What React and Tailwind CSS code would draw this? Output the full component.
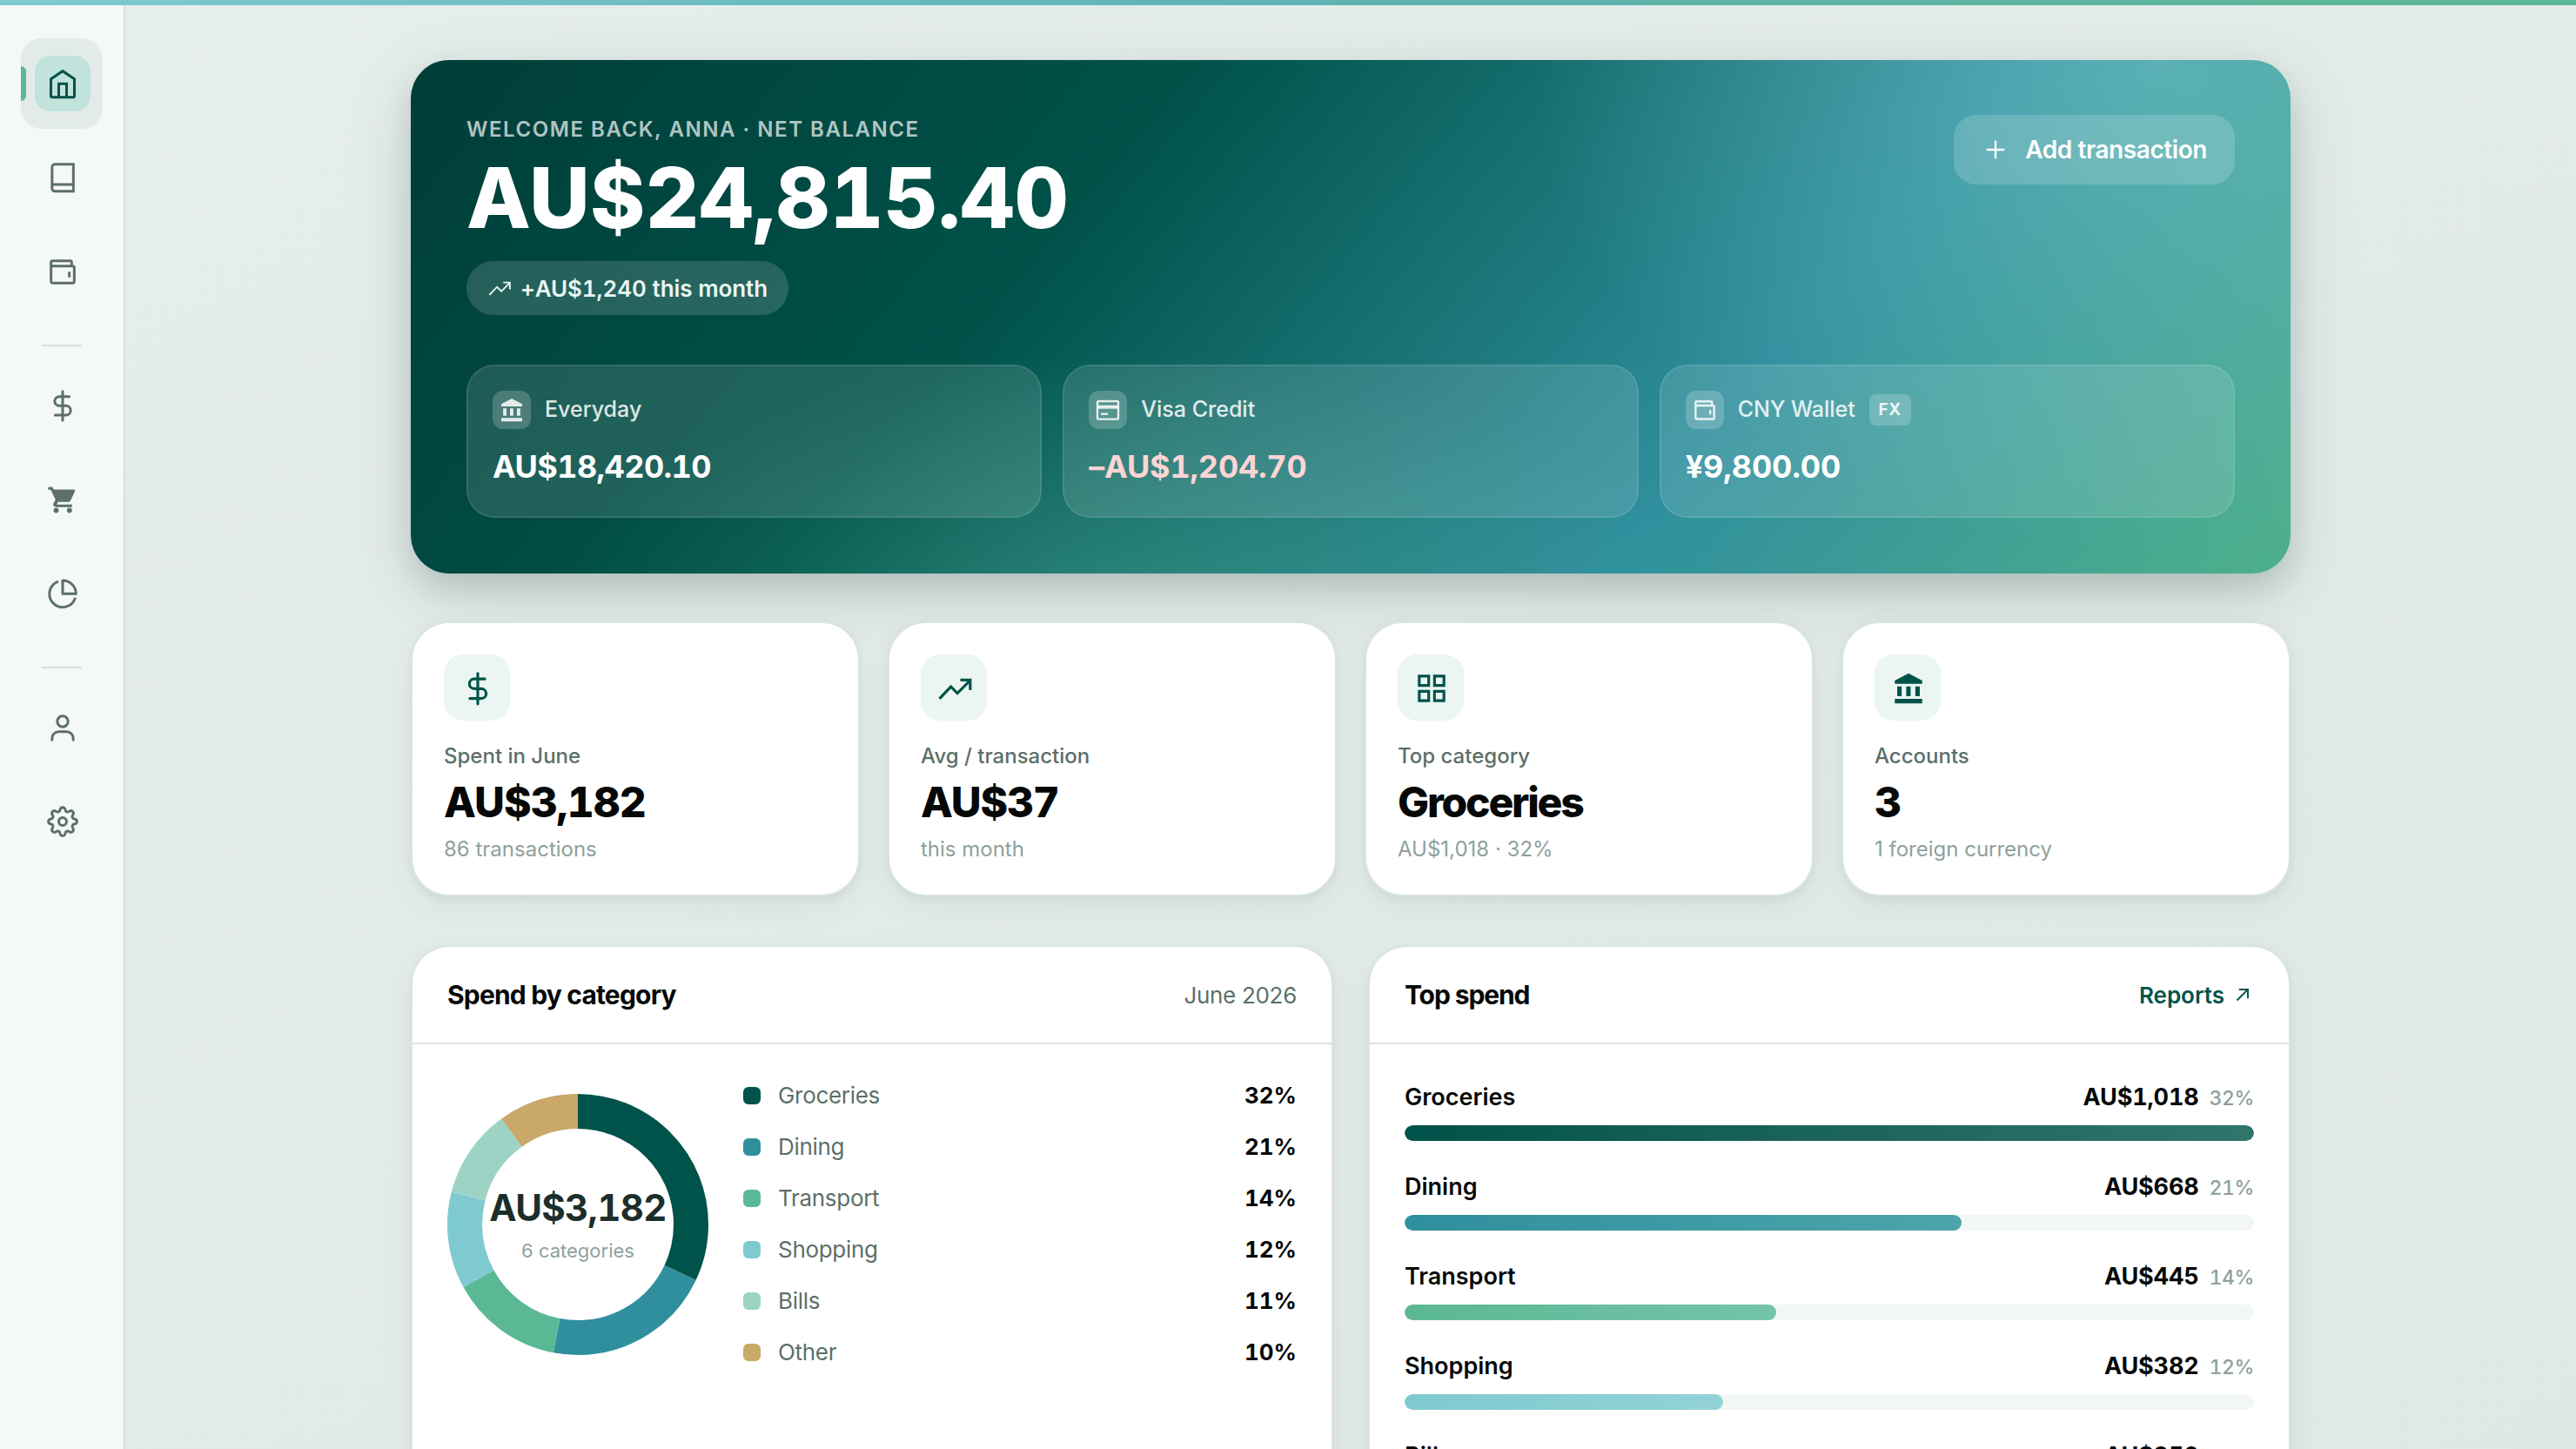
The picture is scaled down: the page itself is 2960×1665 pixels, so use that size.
import React from "react";

const S = ({ size = 40, sw = 1.8, className = "", children }) => (
  <svg width={size} height={size} viewBox="0 0 24 24" fill="none" stroke="currentColor" strokeWidth={sw} className={"shrink-0 " + className}>
    {children}
  </svg>
);

const HomeIcon = (p) => (
  <S {...p}>
    <path d="M3.900 8.900 12 3.400l8.100 5.500V20.400a1.100 1.100 0 0 1-1.100 1.100H5A1.100 1.100 0 0 1 3.900 20.400Z" />
    <path d="M9.300 21.400V12.200h5.400v9.200" />
  </S>
);
const BookIcon = (p) => (
  <S {...p}>
    <path d="M19.400 2.900H6.600A1.900 1.900 0 0 0 4.700 4.800V19.500a2 2 0 0 0 2 2H19.400ZM4.700 16.800H19.400" />
  </S>
);
const WalletIcon = (p) => (
  <S {...p}>
    <path d="M18.200 8.300V5.700a1 1 0 0 0-1-1H5a1 1 0 0 0-1 1V18.700a1.200 1.200 0 0 0 1.200 1.200h13.600a1.200 1.200 0 0 0 1.200-1.200V9.300a1 1 0 0 0-1-1H4" />
    <path d="M16.600 12.200v3.900" />
  </S>
);
const DollarIcon = (p) => (
  <S {...p}>
    <path strokeLinecap="round" d="M12 2.200V22.200M16.600 5.800H9.700a3.200 3.200 0 0 0 0 6.400h4.600a3.200 3.200 0 0 1 0 6.400H6.800" />
  </S>
);
const CartIcon = ({ size = 40 }) => (
  <svg width={size} height={size} viewBox="0 0 24 24" fill="currentColor" className="shrink-0">
    <path transform="translate(0 -0.500)" d="M7.500 18.200c-1 0-1.800.800-1.800 1.800s.800 1.800 1.800 1.800 1.800-.800 1.800-1.800-.800-1.800-1.800-1.800zM2 4v1.800h1.800l3.300 6.900-1.300 2.200c-.700 1.300.200 2.800 1.700 2.800h11v-1.800H7.900l1-1.800h6.900c.700 0 1.300-.400 1.600-.900l3-6.300c.300-.600-.100-1.300-.800-1.300H5.900L5 3.800Zm14.700 14.200c-1 0-1.800.800-1.800 1.800s.800 1.800 1.800 1.800 1.800-.800 1.800-1.800-.800-1.800-1.800-1.800z" />
  </svg>
);
const PieIcon = (p) => (
  <S {...p}>
    <path d="M12 12.200V3a9.200 9.200 0 0 1 9.200 9.200Z" strokeLinejoin="round" />
    <path d="M9 3.700A9.100 9.100 0 1 0 20.700 14.900" />
  </S>
);
const UserIcon = (p) => (
  <S {...p}>
    <circle cx="12" cy="7.800" r="3.700" />
    <path strokeLinecap="round" d="M4.700 20.500V19.400a4.500 4.500 0 0 1 4.500-4.500h5.600a4.500 4.500 0 0 1 4.500 4.500V20.500" />
  </S>
);
const GearIcon = (p) => (
  <S {...p}>
    <circle cx="12" cy="12" r="2.700" />
    <path
      strokeLinejoin="round"
      d="M10.300 3.600C10.700 1.700 13.300 1.700 13.700 3.600C13.900 5.300 15.400 5.900 16.700 4.900C18.300 3.800 20.200 5.700 19.100 7.300C18.100 8.600 18.700 10.100 20.400 10.300C22.300 10.700 22.300 13.300 20.400 13.700C18.700 13.900 18.100 15.400 19.100 16.700C20.200 18.300 18.300 20.200 16.700 19.100C15.400 18.100 13.900 18.700 13.700 20.400C13.300 22.300 10.700 22.300 10.300 20.400C10.100 18.700 8.600 18.100 7.300 19.100C5.700 20.200 3.800 18.300 4.900 16.700C5.900 15.400 5.300 13.900 3.600 13.700C1.700 13.300 1.700 10.700 3.600 10.300C5.300 10.100 5.900 8.600 4.900 7.300C3.800 5.700 5.700 3.800 7.300 4.900C8.600 5.900 10.100 5.300 10.300 3.600Z"
    />
  </S>
);
const TrendIcon = (p) => (
  <S {...p}>
    <path d="M2 18.800 9.500 10.900l4.300 4.300L22 6.900M15.700 6.500H22.200V13.200" />
  </S>
);
const GridIcon = (p) => (
  <S {...p}>
    <path d="M3.900 3.900h6.200v6.200H3.900zM13.900 3.900h6.200v6.200h-6.200zM3.900 13.900h6.200v6.200H3.900zM13.900 13.900h6.200v6.200h-6.200z" />
  </S>
);
const BankIcon = ({ size = 40 }) => (
  <svg width={size} height={size} viewBox="0 0 24 24" fill="currentColor" className="shrink-0">
    <path d="M12 2.200 3 6.900V9h18V6.900ZM4.600 10.700h2.900v6.400H4.600zM10.500 10.700h2.900v6.400h-2.900zM16.500 10.700h2.900v6.400h-2.900zM3 18.900h18v3H3z" />
  </svg>
);
const CardIcon = (p) => (
  <S {...p}>
    <rect x="3" y="4.500" width="18" height="15.500" rx="1" />
    <path d="M3 9.500h18" strokeWidth="3" />
    <path d="M6 15.500h6" />
  </S>
);

const NavItem = ({ icon: Icon, active }) => (
  <div
    className={
      "relative flex h-[104px] w-[94px] shrink-0 items-center overflow-hidden rounded-[24px] pl-4 " +
      (active ? "bg-[#e3ebe8] text-[#00534a]" : "text-[#5c6f69]")
    }
  >
    {active && <span className="absolute top-8 left-0 h-10 w-1.5 rounded-r-[6px] bg-[#5bb894]" />}
    <span className={"flex size-16 shrink-0 items-center justify-center rounded-[18px] " + (active ? "bg-[#c2e2dc]" : "")}>
      <Icon size={40} />
    </span>
  </div>
);

const NavDivider = () => <div className="mt-7 mb-3 h-0.5 w-[46px] shrink-0 bg-[#d3dfdc]" />;

const accounts = [
  { icon: BankIcon, name: "Everyday", value: "AU$18,420.10", tone: "text-white tracking-[-0.620px]" },
  { icon: CardIcon, name: "Visa Credit", value: "–AU$1,204.70", tone: "text-[#ffd4d4] tracking-[-0.250px]" },
  { icon: WalletIcon, name: "CNY Wallet", value: "¥9,800.00", tone: "text-white tracking-[-0.120px]", fx: true },
];

const stats = [
  { icon: DollarIcon, label: "Spent in June", value: "AU$3,182", sub: "86 transactions", track: "tracking-[-0.960px]" },
  { icon: TrendIcon, label: "Avg / transaction", value: "AU$37", sub: "this month", track: "tracking-[-1.200px]" },
  { icon: GridIcon, label: "Top category", value: "Groceries", sub: "AU$1,018 · 32%", track: "tracking-[-2.200px]" },
  { icon: BankIcon, label: "Accounts", value: "3", sub: "1 foreign currency", track: "tracking-[-1.200px]" },
];

const cats = [
  { name: "Groceries", pct: 32, amt: "AU$1,018", w: 100, dot: "bg-[#00534a]", bar: "from-[#00534a] to-[#2f756c]", c: "#00534a" },
  { name: "Dining", pct: 21, amt: "AU$668", w: 65.6, dot: "bg-[#2f8f9d]", bar: "from-[#2f8f9d] to-[#4da5ab]", c: "#2f8f9d" },
  { name: "Transport", pct: 14, amt: "AU$445", w: 43.7, dot: "bg-[#5bb894]", bar: "from-[#5bb894] to-[#74c4a9]", c: "#5bb894" },
  { name: "Shopping", pct: 12, amt: "AU$382", w: 37.5, dot: "bg-[#7ecad0]", bar: "from-[#7ecad0] to-[#92d2d6]", c: "#7ecad0" },
  { name: "Bills", pct: 11, amt: "AU$350", w: 34.4, dot: "bg-[#9dd3c5]", bar: "from-[#9dd3c5] to-[#b1dcd1]", c: "#9dd3c5" },
  { name: "Other", pct: 10, amt: "AU$319", w: 31.3, dot: "bg-[#c9a869]", bar: "from-[#c9a869] to-[#d4b987]", c: "#c9a869" },
];

const Donut = () => {
  const r = 130;
  const len = 2 * Math.PI * r;
  let acc = 0;
  return (
    <svg width="300" height="300" viewBox="0 0 300 300">
      {cats.map((k) => {
        const el = (
          <circle
            key={k.name}
            cx="150"
            cy="150"
            r={r}
            fill="none"
            stroke={k.c}
            strokeWidth="40"
            strokeDasharray={`${(k.pct / 100) * len} ${len}`}
            strokeDashoffset={(-acc / 100) * len}
            transform="rotate(-90 150 150)"
          />
        );
        acc += k.pct;
        return el;
      })}
    </svg>
  );
};

const panel =
  "h-[760px] w-[1060px] overflow-hidden rounded-[44px] border-2 border-[#d9e4e1] bg-white bg-clip-padding shadow-[0_4px_8px_rgba(0,60,50,0.04),0_12px_36px_rgba(0,60,50,0.06)]";

export default function App() {
  return (
    <div className="relative flex h-[1665px] w-[2960px] overflow-hidden bg-linear-to-br from-[#e6eeeb] to-[#dfe8e5] font-[Inter,sans-serif] leading-normal">
      <div className="absolute inset-x-0 top-0 z-10 h-1.5 bg-linear-to-r from-[#7ecad0] via-[#5fb3b4] to-[#5bb894]" />

      <aside className="flex h-full w-36 shrink-0 flex-col items-center gap-1 border-r-2 border-[#d3dfdc] bg-[#f4f8f7] pt-11">
        <NavItem icon={HomeIcon} active />
        <NavItem icon={BookIcon} />
        <NavItem icon={WalletIcon} />
        <NavDivider />
        <NavItem icon={DollarIcon} />
        <NavItem icon={CartIcon} />
        <NavItem icon={PieIcon} />
        <NavDivider />
        <NavItem icon={UserIcon} />
        <NavItem icon={GearIcon} />
      </aside>

      <main className="flex grow flex-col items-center gap-14 pt-[69px]">
        <section className="-mb-px flex h-[590px] w-[2160px] shrink-0 flex-col justify-between rounded-[44px] bg-[radial-gradient(ellipse_960px_760px_at_93%_0%,rgba(126,202,208,0.5),transparent_75%),radial-gradient(ellipse_900px_420px_at_38%_110%,rgba(91,184,148,0.35),transparent_75%),linear-gradient(130deg,#003d38_0%,#005249_34%,#2f8f9d_70%,#4fb08c_100%)] p-16 text-white shadow-[0_16px_32px_rgba(0,40,35,0.13),0_24px_80px_rgba(0,40,35,0.13)]">
          <div className="flex items-start justify-between">
            <div className="flex flex-col items-start">
              <div className="h-9 text-[24px] leading-[32px] font-semibold tracking-[1.540px] text-white/70">WELCOME BACK, ANNA · NET BALANCE</div>
              <div className="h-[116px] text-[96px] leading-[116px] font-extrabold tracking-[0.100px] tabular-nums">AU$24,815.40</div>
              <div className="mt-[15px] flex h-[62px] items-center gap-2.5 rounded-full bg-white/15 px-6 text-[26px] font-semibold tracking-[-0.100px] text-[#eaf6f3] tabular-nums">
                <TrendIcon size={28} sw={1.6} />
                <span>+AU$1,240 this month</span>
              </div>
            </div>
            <button className="-mt-px flex h-20 items-center gap-[18px] rounded-[26px] bg-white/17 px-8 text-[28px] font-semibold tracking-[-0.420px]">
              <S size={32} sw={1.8}>
                <path strokeLinecap="round" d="M12 5v14M5 12h14" />
              </S>
              Add transaction
            </button>
          </div>
          <div className="grid grid-cols-3 gap-6">
            {accounts.map((a) => (
              <div key={a.name} className="flex h-44 flex-col rounded-[32px] border-2 border-white/20 bg-white/12 bg-clip-padding p-7">
                <div className="flex h-11 items-center gap-4 text-[25px] font-medium text-white/85">
                  <span className="flex size-11 items-center justify-center rounded-[12px] bg-white/20">
                    <a.icon size={32} />
                  </span>
                  <span className="-mt-px">{a.name}</span>
                  {a.fx && (
                    <span className="flex h-9 w-12 items-center justify-center rounded-[8px] bg-white/20 text-[19px] font-bold tracking-[0.500px]">FX</span>
                  )}
                </div>
                <div className={"mt-4 text-[36px] leading-[54px] font-bold tabular-nums " + a.tone}>{a.value}</div>
              </div>
            ))}
          </div>
        </section>

        <section className="grid w-[2160px] shrink-0 grid-cols-4 gap-8">
          {stats.map((s) => (
            <div
              key={s.label}
              className="flex h-[316px] flex-col rounded-[44px] border-2 border-[#d9e4e1] bg-white px-9 pt-9 shadow-[0_4px_8px_rgba(0,60,50,0.05),0_12px_36px_rgba(0,60,50,0.06)]"
            >
              <span className="flex size-[76px] items-center justify-center rounded-[22px] bg-[#ebf5f2] pt-px pl-px text-[#00534a]">
                <s.icon size={42} />
              </span>
              <div className="mt-5 h-[41px] text-[24px] leading-[41px] font-medium text-[#5c6f69]">{s.label}</div>
              <div className={"h-16 text-[48px] leading-[66px] font-extrabold text-[#050807] tabular-nums " + s.track}>{s.value}</div>
              <div className="mt-[5px] text-[24px] leading-[36px] text-[#8fa19c]">{s.sub}</div>
            </div>
          ))}
        </section>

        <section className="flex w-[2160px] shrink-0 justify-between">
          <div className={panel}>
            <div className="flex h-28 items-center justify-between border-b-2 border-[#d9e4e1] px-10">
              <h2 className="text-[30px] font-bold tracking-[-0.820px] text-[#050807]">Spend by category</h2>
              <span className="text-[26px] tracking-[-0.300px] text-[#5c6f69]">June 2026</span>
            </div>
            <div className="flex items-center gap-10 p-10">
              <div className="relative size-[300px] shrink-0">
                <Donut />
                <div className="absolute inset-0 flex flex-col items-center justify-center pt-1">
                  <div className="text-[42px] leading-[50px] font-bold tracking-[-0.650px] text-[#1c2e2a] tabular-nums">AU$3,182</div>
                  <div className="mt-2 text-[22px] leading-[33px] text-[#8fa19c]">6 categories</div>
                </div>
              </div>
              <div className="-mt-px flex grow flex-col gap-5">
                {cats.map((k) => (
                  <div key={k.name} className="flex h-[39px] items-center text-[26px]">
                    <span className={"mr-5 size-5 rounded-[6px] " + k.dot} />
                    <span className="-mt-px grow tracking-[-0.300px] text-[#5c6f69]">{k.name}</span>
                    <span className="-mt-px font-bold text-[#050807] tabular-nums">{k.pct}%</span>
                  </div>
                ))}
              </div>
            </div>
          </div>

          <div className={panel}>
            <div className="flex h-28 items-center justify-between border-b-2 border-[#d9e4e1] px-10">
              <h2 className="text-[30px] font-bold tracking-[-1.100px] text-[#050807]">Top spend</h2>
              <span className="flex items-center gap-2 text-[26px] font-semibold text-[#00534a]">
                Reports
                <S size={26} sw={1.8}>
                  <path d="M6 18 17 6.800M8 6.500H17.500V16" />
                </S>
              </span>
            </div>
            <div className="flex flex-col gap-[33px] p-10 pt-[41px]">
              {cats.map((k) => (
                <div key={k.name} className="flex flex-col gap-[13px]">
                  <div className="flex h-[39px] items-baseline text-[27px] leading-[39px] text-[#050807] tabular-nums">
                    <span className="grow font-semibold">{k.name}</span>
                    <span className="font-bold tracking-[-0.150px]">{k.amt}</span>
                    <span className="ml-3 text-[23px] font-medium tracking-[-0.400px] text-[#8fa19c]">{k.pct}%</span>
                  </div>
                  <div className="h-[18px] overflow-hidden rounded-full bg-[#f2f7f5]">
                    <div className={"h-full rounded-full bg-linear-to-r " + k.bar} style={{ width: k.w + "%" }} />
                  </div>
                </div>
              ))}
            </div>
          </div>
        </section>
      </main>
    </div>
  );
}
